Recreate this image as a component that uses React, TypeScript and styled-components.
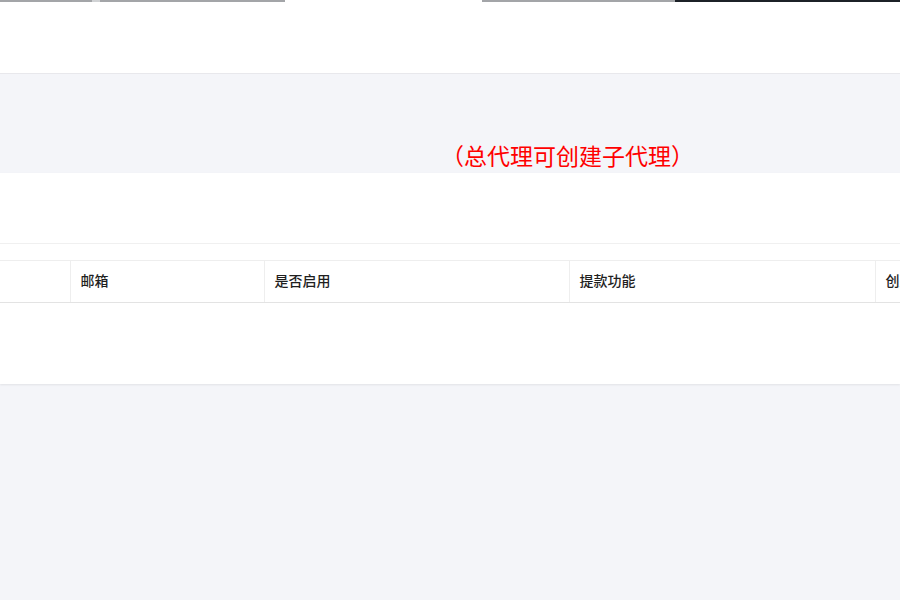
import styled, { createGlobalStyle } from 'styled-components';

const GlobalStyle = createGlobalStyle`
  html, body {
    margin: 0;
    padding: 0;
    background: #f4f5f9;
    font-family: "Noto Sans CJK SC", "Noto Sans", sans-serif;
    overflow: hidden;
  }
`;

const Page = styled.div`
  width: 900px;
  height: 600px;
  background: #f4f5f9;
  overflow: hidden;
`;

const Header = styled.div`
  height: 73px;
  background: #fff;
  border-bottom: 1px solid #e8e8ec;
`;

const TopStrip = styled.div`
  display: flex;
  height: 2px;
`;

const StripBar = styled.div<{ $w: number; $color: string }>`
  width: ${(p) => p.$w}px;
  height: 2px;
  background: ${(p) => p.$color};
  flex-shrink: 0;
`;

const NoteRow = styled.div`
  height: 99px;
  display: flex;
  align-items: flex-end;
  padding-left: 441px;
`;

const Note = styled.span`
  color: #ff0000;
  font-size: 23px;
  line-height: 30px;
  margin-bottom: 3px;
`;

const Card = styled.div`
  background: #fff;
  box-shadow: 0 1px 2px rgba(0, 0, 0, 0.08);
`;

const CardHeader = styled.div`
  height: 70px;
  border-bottom: 1px solid #f0f0f0;
`;

const TableWrap = styled.div`
  padding-top: 16px;
  height: 124px;
  overflow: hidden;
`;

const Table = styled.table`
  border-collapse: collapse;
  table-layout: fixed;
  width: 1100px;
`;

const Th = styled.th<{ $w: number }>`
  box-sizing: border-box;
  width: ${(p) => p.$w}px;
  height: 42px;
  padding: 0 10px 3px;
  text-align: left;
  font-size: 14px;
  font-weight: 500;
  color: #1f1f1f;
  border-top: 1px solid #eeeeee;
  border-bottom: 1px solid #e3e3e3;
  border-left: 1px solid #eeeeee;
  white-space: nowrap;
  &:first-child {
    border-left: none;
  }
`;

const columns = [
  { w: 70, label: '' },
  { w: 194, label: '邮箱' },
  { w: 305, label: '是否启用' },
  { w: 306, label: '提款功能' },
  { w: 225, label: '创建时间' },
];

const strip = [
  { w: 92, c: '#a3a5a8' },
  { w: 8, c: '#d0d2d4' },
  { w: 185, c: '#a3a5a8' },
  { w: 197, c: '#ffffff' },
  { w: 193, c: '#a3a5a8' },
  { w: 225, c: '#1c2127' },
];

export default function App() {
  return (
    <Page>
      <GlobalStyle />
      <Header>
        <TopStrip>
          {strip.map((s, i) => (
            <StripBar key={i} $w={s.w} $color={s.c} />
          ))}
        </TopStrip>
      </Header>
      <NoteRow>
        <Note>（总代理可创建子代理）</Note>
      </NoteRow>
      <Card>
        <CardHeader />
        <TableWrap>
          <Table>
            <thead>
              <tr>
                {columns.map((c, i) => (
                  <Th key={i} $w={c.w}>{c.label}</Th>
                ))}
              </tr>
            </thead>
          </Table>
        </TableWrap>
      </Card>
    </Page>
  );
}
